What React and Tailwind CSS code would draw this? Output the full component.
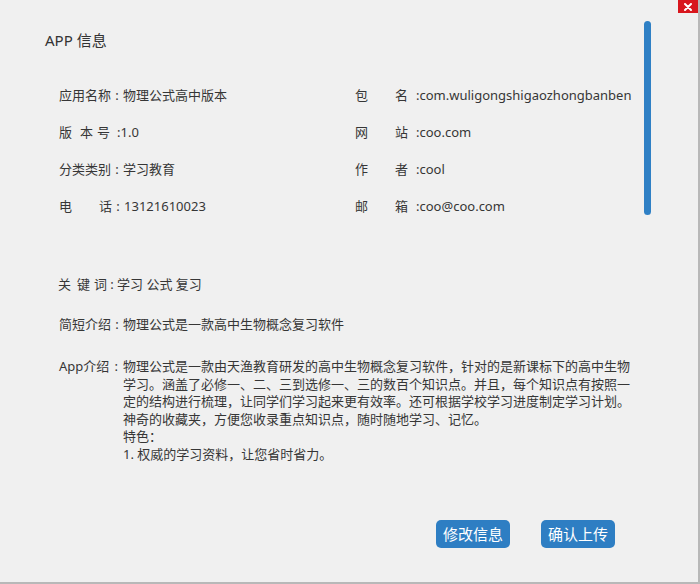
import React from "react";

const font = { fontFamily: '"Noto Sans", "Noto Sans CJK SC", sans-serif' };

function Row({ children }) {
  return <div className="h-[37px] flex items-center whitespace-nowrap">{children}</div>;
}

function Colon() {
  return <span className="w-[12px] text-center">:</span>;
}

export default function App() {
  return (
    <div
      className="relative w-[700px] h-[584px] bg-[#f0f0f0] border-r-2 border-b-2 border-[#b8b8b8] text-[#363636] text-[13px] overflow-hidden"
      style={font}
    >
      {/* close button */}
      <div className="absolute top-0 right-0 w-[20px] h-[13px] bg-[#d8161d] flex items-center justify-center">
        <svg width="8" height="8" viewBox="0 0 8 8">
          <path d="M1 1L7 7M7 1L1 7" stroke="white" strokeWidth="2" strokeLinecap="round" />
        </svg>
      </div>
      {/* scrollbar */}
      <div className="absolute left-[644px] top-[21px] w-[7px] h-[194px] rounded-full bg-[#2f80c5]" />

      <div className="pl-[45px] pt-[31px]">
        <div className="text-[15px] leading-[18px] text-[#333]">APP 信息</div>

        <div className="ml-[14px] mt-[28px] grid grid-cols-[296px_auto]">
          <div>
            <Row>
              <span>应用名称</span>
              <Colon />
              <span>物理公式高中版本</span>
            </Row>
            <Row>
              <span>版</span>
              <span className="ml-[8px]">本</span>
              <span className="ml-[4px]">号</span>
              <span className="ml-[7px]">:</span>
              <span>1.0</span>
            </Row>
            <Row>
              <span>分类类别</span>
              <Colon />
              <span>学习教育</span>
            </Row>
            <Row>
              <span>电</span>
              <span className="ml-[27px]">话</span>
              <Colon />
              <span>13121610023</span>
            </Row>
          </div>
          <div>
            <Row>
              <span>包</span>
              <span className="ml-[27px]">名</span>
              <span className="ml-[8px]">:</span>
              <span>com.wuligongshigaozhongbanben</span>
            </Row>
            <Row>
              <span>网</span>
              <span className="ml-[27px]">站</span>
              <span className="ml-[8px]">:</span>
              <span>coo.com</span>
            </Row>
            <Row>
              <span>作</span>
              <span className="ml-[27px]">者</span>
              <span className="ml-[8px]">:</span>
              <span>cool</span>
            </Row>
            <Row>
              <span>邮</span>
              <span className="ml-[27px]">箱</span>
              <span className="ml-[8px]">:</span>
              <span>coo@coo.com</span>
            </Row>
          </div>
        </div>

        <div className="ml-[13px] mt-[50px] h-[20px] flex items-center whitespace-nowrap">
          <span>关</span>
          <span className="ml-[6px]">键</span>
          <span className="ml-[4px]">词</span>
          <span className="w-[10px] text-center">:</span>
          <span>学习 公式 复习</span>
        </div>

        <div className="ml-[14px] mt-[20px] h-[20px] flex items-center whitespace-nowrap">
          <span>简短介绍</span>
          <Colon />
          <span>物理公式是一款高中生物概念复习软件</span>
        </div>

        <div className="ml-[14px] mt-[23px] flex leading-[17.5px] whitespace-nowrap">
          <div className="w-[64px] flex">
            <span>App介绍</span>
            <span className="flex-1 text-center">:</span>
          </div>
          <div className="flex flex-col">
            <span>物理公式是一款由天渔教育研发的高中生物概念复习软件，针对的是新课标下的高中生物</span>
            <span>学习。涵盖了必修一、二、三到选修一、三的数百个知识点。并且，每个知识点有按照一</span>
            <span>定的结构进行梳理，让同学们学习起来更有效率。还可根据学校学习进度制定学习计划。</span>
            <span>神奇的收藏夹，方便您收录重点知识点，随时随地学习、记忆。</span>
            <span>特色：</span>
            <span>1. 权威的学习资料，让您省时省力。</span>
          </div>
        </div>

        <div className="ml-[391px] mt-[57px] flex gap-[31px]">
          <button className="w-[74px] h-[28px] rounded-[5px] bg-[#2e7ec3] text-white text-[15px] flex items-center justify-center">
            修改信息
          </button>
          <button className="w-[74px] h-[28px] rounded-[5px] bg-[#2e7ec3] text-white text-[15px] flex items-center justify-center">
            确认上传
          </button>
        </div>
      </div>
    </div>
  );
}
